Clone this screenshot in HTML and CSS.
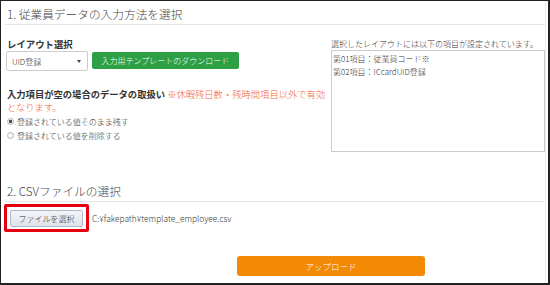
FILE: index.html
```html
<!DOCTYPE html>
<html lang="ja">
<head>
    <meta charset="UTF-8">
    <title>CSV取込</title>
    <meta name="viewport" content="width=device-width, initial-scale=1.0">
    <link rel="stylesheet" href="styles.css">
</head>
<body>
    <div class="frame">
        <div class="page">
            <h2 class="section-title">1. 従業員データの入力方法を選択</h2>

            <div class="columns">
                <div class="left-col">
                    <div class="field-label">レイアウト選択</div>
                    <div class="control-row">
                        <div class="select-box">
                            <span>UID登録</span>
                            <span class="caret"></span>
                        </div>
                        <button class="btn-green" type="button">入力用テンプレートのダウンロード</button>
                    </div>

                    <p class="empty-rule"><b class="rule-label">入力項目が空の場合のデータの取扱い</b> <span class="rule-note">※休暇残日数・残時間項目以外で有効となります。</span></p>

                    <label class="radio-line">
                        <input type="radio" name="emptyRule" checked>
                        <span>登録されている値そのまま残す</span>
                    </label>
                    <label class="radio-line">
                        <input type="radio" name="emptyRule">
                        <span>登録されている値を削除する</span>
                    </label>
                </div>

                <div class="right-col">
                    <div class="layout-caption">選択したレイアウトには以下の項目が設定されています。</div>
                    <div class="layout-items">
                        <div>第01項目：従業員コード※</div>
                        <div>第02項目：ICcardUID登録</div>
                    </div>
                </div>
            </div>

            <h2 class="section-title second">2. CSVファイルの選択</h2>

            <div class="file-row">
                <div class="highlight">
                    <button class="btn-file" type="button">ファイルを選択</button>
                </div>
                <span class="file-path">C:¥fakepath¥template_employee.csv</span>
            </div>

            <button class="btn-upload" type="button">アップロード</button>
        </div>
    </div>
</body>
</html>
```

FILE: styles.css
```css
body {
    margin: 0;
    font-family: "Noto Sans CJK JP", "Noto Sans", sans-serif;
    font-weight: 300;
    color: #333;
    background-color: #fff;
}

.frame {
    width: 550px;
    height: 285px;
    box-sizing: border-box;
    border: 1px solid #222;
    border-right-width: 2px;
    border-bottom-width: 2px;
    overflow: hidden;
}

.page {
    height: 100%;
    padding-left: 4px;
    margin-right: 2px;
    border-right: 1px solid #ececec;
}

.section-title {
    margin: 0;
    padding: 5px 2px 2px;
    font-size: 11.7px;
    font-weight: 300;
    line-height: 16px;
    color: #444;
    border-bottom: 1px solid #e5e5e5;
}

.section-title.second {
    margin-top: 26px;
}

.columns {
    display: grid;
    grid-template-columns: 1fr 214px;
    margin-top: 12px;
    padding-left: 1px;
}

.field-label {
    font-size: 9.4px;
    font-weight: bold;
    line-height: 14px;
    padding-left: 1px;
}

.control-row {
    display: flex;
    align-items: flex-start;
    gap: 4px;
}

.select-box {
    width: 82px;
    height: 20px;
    box-sizing: border-box;
    border: 1px solid #ccc;
    border-radius: 2px;
    display: flex;
    align-items: center;
    justify-content: space-between;
    padding: 0 6px 0 5px;
    font-size: 8px;
}

.caret {
    width: 0;
    height: 0;
    border-left: 2.5px solid transparent;
    border-right: 2.5px solid transparent;
    border-top: 3px solid #444;
}

.btn-green {
    margin-top: 1px;
    width: 147px;
    height: 17px;
    border: none;
    border-radius: 2px;
    background-color: #2d9f44;
    color: #fff;
    font-family: inherit;
    font-weight: 300;
    font-size: 8px;
    padding: 0;
}

.empty-rule {
    margin: 17px 0 0;
    font-size: 9.3px;
    line-height: 13px;
    padding-left: 1px;
}

.rule-label {
    font-weight: bold;
}

.rule-note {
    color: #f0643c;
}

.radio-line {
    display: flex;
    align-items: center;
    gap: 3px;
    height: 14px;
    font-size: 8px;
    padding-left: 1px;
}

.radio-line input {
    appearance: none;
    margin: 0;
    width: 7px;
    height: 7px;
    border: 1px solid #b5b5b5;
    border-radius: 50%;
    background: radial-gradient(circle, #fff 0, #e8e8e8 100%);
}

.radio-line input:checked {
    background: radial-gradient(circle, #555 0, #555 1.5px, #eee 2px);
}

.layout-caption {
    font-size: 8px;
    line-height: 12px;
    margin-top: 1px;
}

.layout-items {
    height: 102px;
    box-sizing: border-box;
    border: 1px solid #ccc;
    padding: 1px 1px;
    font-size: 8px;
    line-height: 13px;
}

.file-row {
    display: flex;
    align-items: center;
    gap: 3px;
    margin-top: 2px;
    margin-left: -1px;
}

.highlight {
    border: 3px solid #e60012;
    border-radius: 2px;
    padding: 3px 3px 2px 3px;
    display: flex;
}

.btn-file {
    width: 73px;
    height: 17px;
    padding: 0;
    border: 1px solid #aeb8cc;
    border-radius: 2px;
    background: linear-gradient(#f3f5f8, #dfe3ea);
    color: #333;
    font-family: inherit;
    font-weight: 300;
    font-size: 8px;
}

.file-path {
    font-size: 8.4px;
}

.btn-upload {
    display: block;
    margin: 24px 0 0 232px;
    width: 188px;
    height: 20px;
    border: none;
    border-radius: 3px;
    background-color: #f28a06;
    color: #fff;
    font-family: inherit;
    font-weight: 300;
    font-size: 8.5px;
    padding: 0;
}
```
